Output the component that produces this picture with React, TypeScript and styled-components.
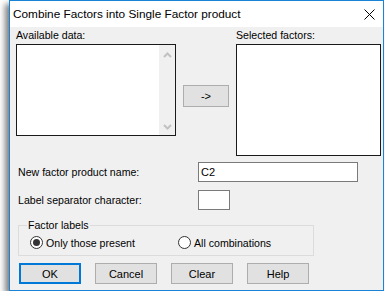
import React from "react";
import styled, { createGlobalStyle } from "styled-components";

const GlobalStyle = createGlobalStyle`
  html, body {
    margin: 0;
    padding: 0;
    background: #ffffff;
  }
  #root {
    padding-left: 9px;
  }
`;

const Window = styled.div`
  box-sizing: border-box;
  width: 375px;
  height: 291px;
  border: 1px solid #1883d7;
  background: #f0f0f0;
  display: flex;
  flex-direction: column;
  box-shadow: -4px 4px 6px rgba(0, 0, 0, 0.5);
  font-family: "Liberation Sans", Arial, sans-serif;
  font-size: 10.6px;
  color: #000;
`;

const TitleBar = styled.div`
  height: 26px;
  background: #fff;
  display: flex;
  align-items: center;
  justify-content: space-between;
  padding: 0 8px 0 3px;
  font-size: 11.8px;
`;

const CloseIcon = () => (
  <svg width="11" height="11" viewBox="0 0 11 11">
    <path d="M0.5 0.5 L10.5 10.5 M10.5 0.5 L0.5 10.5" stroke="#000" strokeWidth="1" />
  </svg>
);

const Body = styled.div`
  flex: 1;
  display: flex;
  flex-direction: column;
  padding: 0 2px 0 6px;
`;

const TopSection = styled.div`
  display: grid;
  grid-template-columns: 160px 60px 145px;
`;

const Column = styled.div`
  display: flex;
  flex-direction: column;
`;

const Caption = styled.div`
  height: 13px;
  line-height: 13px;
  margin-top: 2px;
`;

const ListBox = styled.div<{ $height: number }>`
  box-sizing: border-box;
  margin-top: 2px;
  height: ${(p) => p.$height}px;
  border: 1px solid #1a1a1a;
  background: #fff;
  display: flex;
  justify-content: flex-end;
`;

const ScrollBar = styled.div`
  width: 16px;
  background: #f0f0f0;
  display: flex;
  flex-direction: column;
  justify-content: space-between;
  align-items: center;
  padding: 7px 0 5px;
`;

const Chevron = ({ down }: { down?: boolean }) => (
  <svg width="9" height="6" viewBox="0 0 9 6">
    <path
      d={down ? "M1 1 L4.5 4.5 L8 1" : "M1 5 L4.5 1.5 L8 5"}
      fill="none"
      stroke="#c2c2c2"
      strokeWidth="2"
    />
  </svg>
);

const Button = styled.button<{ $default?: boolean }>`
  box-sizing: border-box;
  width: 62px;
  height: 21px;
  padding: 0;
  background: #e1e1e1;
  border: ${(p) => (p.$default ? "2px solid #0078d7" : "1px solid #adadad")};
  font-family: inherit;
  font-size: 11px;
  color: #000;
`;

const ArrowButton = styled(Button)`
  width: 46px;
  height: 22px;
  margin: 58px 0 0 7px;
`;

const FieldRow = styled.div<{ $gap: number }>`
  display: grid;
  grid-template-columns: 180px auto;
  align-items: center;
  margin-top: ${(p) => p.$gap}px;
  padding-left: 2px;
`;

const TextInput = styled.input<{ $width: number }>`
  box-sizing: border-box;
  width: ${(p) => p.$width}px;
  height: 20px;
  border: 1px solid #7a7a7a;
  background: #fff;
  padding: 0 2px;
  font-family: inherit;
  font-size: 11px;
  outline: none;
`;

const GroupBox = styled.div`
  box-sizing: border-box;
  width: 296px;
  margin: 15px 0 0 2px;
  border: 1px solid #dcdcdc;
  padding: 0 0 5px 11px;
`;

const Legend = styled.div`
  width: max-content;
  margin: -7px 0 0 -3px;
  padding: 0 1px;
  background: #f0f0f0;
  line-height: 13px;
`;

const RadioRow = styled.div`
  display: grid;
  grid-template-columns: 148px auto;
  margin-top: 3px;
  height: 15px;
  align-items: center;
`;

const RadioLabel = styled.label`
  display: flex;
  align-items: center;
  gap: 3px;
`;

const RadioCircle = styled.span<{ $checked?: boolean }>`
  box-sizing: border-box;
  width: 13px;
  height: 13px;
  border-radius: 50%;
  border: 1px solid #333;
  background: #fff;
  display: flex;
  align-items: center;
  justify-content: center;

  &::after {
    content: "";
    width: 7px;
    height: 7px;
    border-radius: 50%;
    background: ${(p) => (p.$checked ? "#333" : "transparent")};
  }
`;

const ButtonRow = styled.div`
  display: flex;
  gap: 14px;
  margin: 7px 0 0 3px;
`;

const Radio = ({ label, checked }: { label: string; checked?: boolean }) => (
  <RadioLabel>
    <RadioCircle $checked={checked} />
    {label}
  </RadioLabel>
);

export default function App() {
  return (
    <>
      <GlobalStyle />
      <Window>
        <TitleBar>
          <span>Combine Factors into Single Factor product</span>
          <CloseIcon />
        </TitleBar>
        <Body>
          <TopSection>
            <Column>
              <Caption>Available data:</Caption>
              <ListBox $height={92}>
                <ScrollBar>
                  <Chevron />
                  <Chevron down />
                </ScrollBar>
              </ListBox>
            </Column>
            <Column>
              <ArrowButton>-&gt;</ArrowButton>
            </Column>
            <Column>
              <Caption>Selected factors:</Caption>
              <ListBox $height={112} />
            </Column>
          </TopSection>

          <FieldRow $gap={6}>
            <span>New factor product name:</span>
            <TextInput $width={160} defaultValue="C2" />
          </FieldRow>
          <FieldRow $gap={8}>
            <span>Label separator character:</span>
            <TextInput $width={32} defaultValue="" />
          </FieldRow>

          <GroupBox>
            <Legend>Factor labels</Legend>
            <RadioRow>
              <Radio label="Only those present" checked />
              <Radio label="All combinations" />
            </RadioRow>
          </GroupBox>

          <ButtonRow>
            <Button $default>OK</Button>
            <Button>Cancel</Button>
            <Button>Clear</Button>
            <Button>Help</Button>
          </ButtonRow>
        </Body>
      </Window>
    </>
  );
}
